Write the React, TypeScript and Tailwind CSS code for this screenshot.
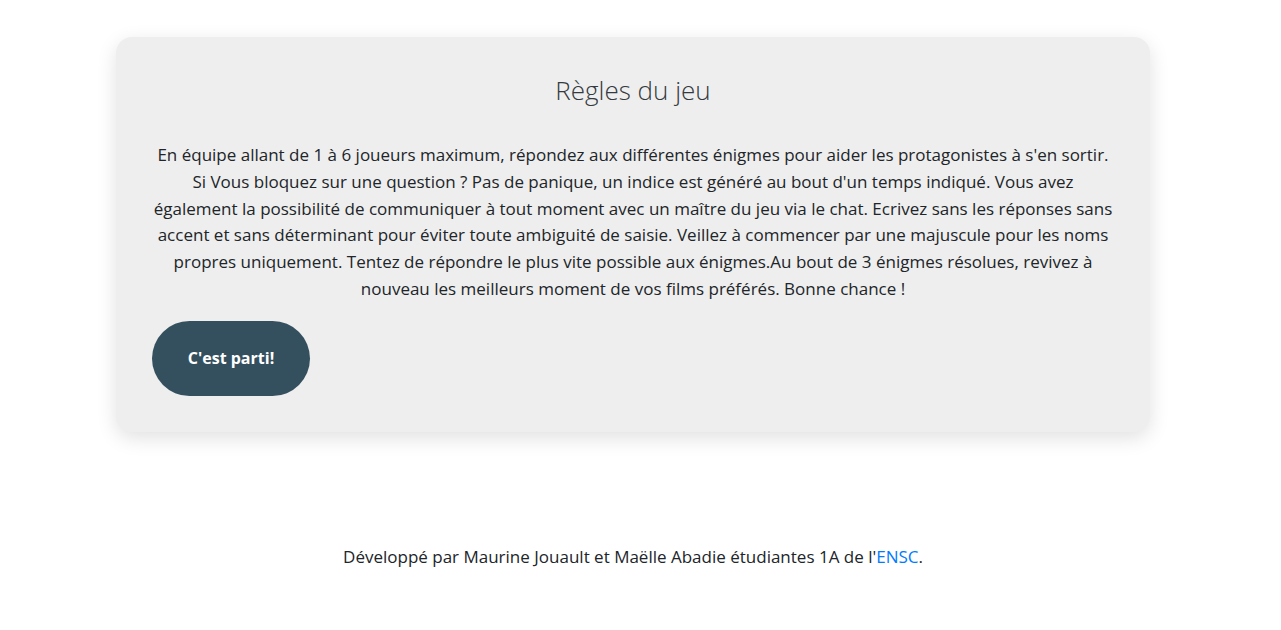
import React from "react";

export default function App() {
  const font = { fontFamily: "'Open Sans', 'Noto Sans', sans-serif" };
  return (
    <div className="min-h-[630px] w-[1266px] bg-white text-[#212529]" style={font}>
      <div className="pt-[37px] flex justify-center">
        <div className="w-[1034px] bg-[#eeeeee] rounded-[16px] shadow-[0_6px_20px_rgba(0,0,0,0.12)] px-[36px] pt-[36px] pb-[36px]">
          <h1 className="text-center text-[26px] font-light text-[#343a40] leading-[34px]">Règles du jeu</h1>
          <p className="mt-[35px] text-center text-[17px] leading-[26.8px]">
            En équipe allant de 1 à 6 joueurs maximum, répondez aux différentes énigmes pour aider les protagonistes à s'en sortir.<br />
            Si Vous bloquez sur une question ? Pas de panique, un indice est généré au bout d'un temps indiqué. Vous avez<br />
            également la possibilité de communiquer à tout moment avec un maître du jeu via le chat. Ecrivez sans les réponses sans<br />
            accent et sans déterminant pour éviter toute ambiguité de saisie. Veillez à commencer par une majuscule pour les noms<br />
            propres uniquement. Tentez de répondre le plus vite possible aux énigmes.Au bout de 3 énigmes résolues, revivez à<br />
            nouveau les meilleurs moment de vos films préférés. Bonne chance !
          </p>
          <div className="mt-[18px]">
            <button className="w-[158px] h-[75px] rounded-full bg-[#34505f] text-white font-bold text-[16px]">C'est parti!</button>
          </div>
        </div>
      </div>
      <footer className="mt-[113px] text-center text-[17px] leading-[24px]">
        Développé par Maurine Jouault et Maëlle Abadie étudiantes 1A de l'<a className="text-[#007bff]" href="#">ENSC</a>.
      </footer>
    </div>
  );
}
